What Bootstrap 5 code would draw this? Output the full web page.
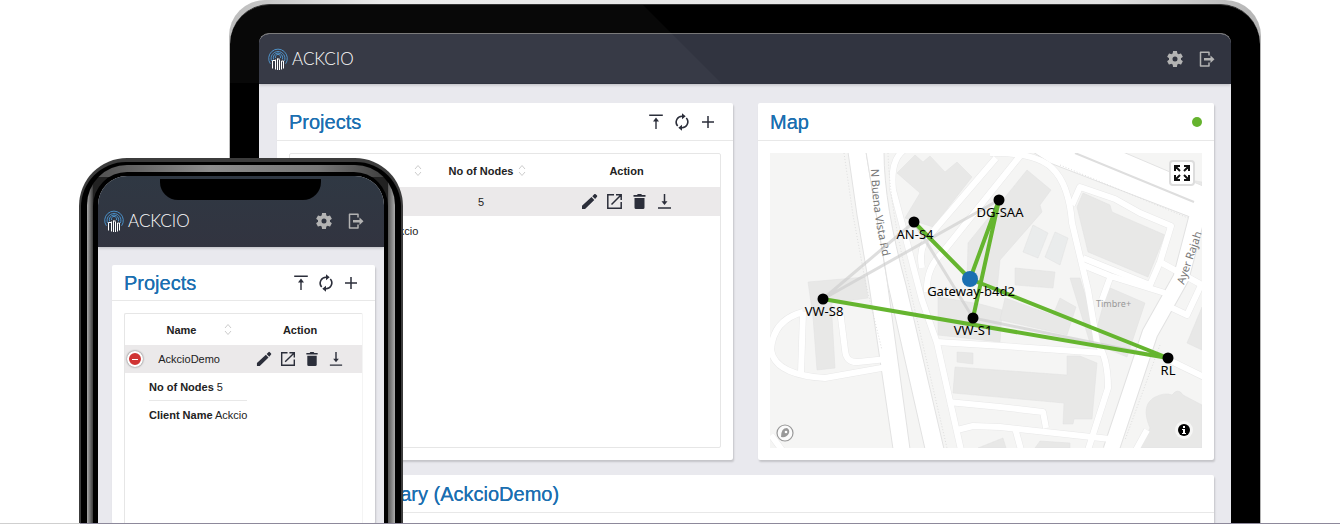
<!DOCTYPE html>
<html lang="en">
<head>
<meta charset="utf-8">
<meta name="viewport" content="width=device-width, initial-scale=1">
<title>Ackcio dashboard</title>
<link href="https://cdn.jsdelivr.net/npm/bootstrap@5.3.0/dist/css/bootstrap.min.css" rel="stylesheet">
<style>
  body { font-family: "Liberation Sans", Arial, sans-serif; font-size: 11px; line-height: 16px; color: #222; background: #fff; }
  .stage { height: 100vh; padding-left: 229px; padding-right: 79px; }
  .ground { height: 1px; bottom: 0; left: 0; right: 0; z-index: 5; background: linear-gradient(to right, #cfcfcf 80px, #8d899b 80px); }

  /* tablet */
  .tablet-rim { background: linear-gradient(to right, #bcbcbc, #ececec 15%, #e2e2e2 85%, #b4b4b4); border-radius: 36px 36px 0 0; padding: 4px 1px 0; min-height: 100%; }
  .tablet-bezel { background: #000; border-radius: 40px 40px 0 0; border-top: 1px solid #333; padding: 28px 29px 0 29px; }
  .tablet-bezel::before { content: ""; position: absolute; top: 0; left: 0; right: 0; height: 78px; border-radius: 40px 0 0 0; background: rgba(255,255,255,.03); clip-path: polygon(0 0, 413px 0, 491px 78px, 0 78px); z-index: 1; pointer-events: none; }
  .tablet-screen { border-radius: 10px 10px 0 0; background: #e9e9ee; border-top: 1px solid #777; overflow: hidden; }
  .app-bar { background: #313440; height: 50px; padding: 0 14px 0 9px; box-shadow: 0 1px 3px rgba(0,0,0,.2); }
  .board { padding: 19px 17px 0 18px; }
  .board-grid { display: grid; grid-template-columns: 1fr 1fr; column-gap: 25px; row-gap: 15px; }
  .span-all { grid-column: 1 / -1; }

  /* brand and bar buttons */
  .wordmark { font-family: Lato, sans-serif; font-weight: 300; font-size: 17px; line-height: 20px; color: #fff; }
  .tool { border: 0; background: none; padding: 0; display: flex; align-items: center; justify-content: center; width: 20px; height: 20px; color: #2b2e3a; }
  .app-bar .tool { color: #b3b3b3; }
  .tool-sm { width: 17px; height: 17px; }

  /* panels */
  .panel { background: #fff; border: 0; border-radius: 2px; box-shadow: 1px 2px 2px rgba(0,0,0,.16); }
  .panel-top { height: 38px; border-bottom: 1px solid #e8e8e8; padding: 0 12px; }
  .panel-tools { display: flex; gap: 6px; margin-right: 3px; }
  .panel-title { font-size: 20px; line-height: 24px; font-weight: 400; color: #1b6fb1; margin: 0; text-shadow: 0 0 0 #1b6fb1; }
  .panel-main { padding: 12px 12px 12px 12px; }
  .frame { border: 1px solid #e6e6e6; border-radius: 2px; height: 295px; }
  .status { width: 10px; height: 10px; border-radius: 5px; background: #65b32e; }

  /* project table */
  .grid-table { width: 100%; table-layout: fixed; text-align: center; }
  .grid-table th { height: 33px; padding: 0; font-weight: 700; position: relative; }
  .grid-table td { padding: 0; height: 29px; }
  .grid-table .hit td { background: #ebe9ea; }
  .c-name { width: 139px; } .c-nodes { width: 104px; }
  .phone .c-name { width: 113px; }
  .phone .grid-table th { height: 31px; }
  .phone .grid-table td { height: 28px; }
  .actions { display: flex; justify-content: center; gap: 8px; }
  .phone .actions { gap: 7px; }
  .sorter { position: absolute; right: 7px; top: 10px; width: 8px; height: 13px; padding: 0; border: 0; background: none; color: #ccc; display: flex; }
  .phone .sorter { top: 9px; right: 6px; }
  .toggle { width: 16px; height: 16px; border: 2px solid #fff; border-radius: 8px; background: #d03434; box-shadow: 0 0 2px #555; color: #fff; padding: 0; display: flex; align-items: center; justify-content: center; }
  .toggle::before { content: ""; width: 6px; height: 1px; background: #fff; }
  .name-cell { padding: 0 18px 0 2px; }
  .more { list-style: none; margin: 0 0 0 30px; padding: 0; text-align: left; }
  .more li { padding: 6px 0 5px; }
  .phone .more { margin-left: 24px; display: table; }
  .phone .more li + li { border-top: 1px solid #e8e8e8; }

  /* phone */
  .phone { left: 79px; top: 158px; bottom: 0; width: 324px; z-index: 3; background: #3c3c3c; border-radius: 48px 48px 0 0; padding: 4px 2px 0; }
  .ring-a { height: 100%; background: #000; border-radius: 45px 45px 0 0; padding: 3px 6px 0; }
  .ring-b { height: 100%; border-radius: 40px 40px 0 0; padding: 7px 7px 0 6px;
    background: linear-gradient(to right, #555 6%, #8d8d8d 40%, #777 75%, #444 95%) top / 100% 12px no-repeat, linear-gradient(to right, #aaa, #3a3a3a) left / 6px 100% no-repeat, linear-gradient(to right, #555, #aaa) right / 7px 100% no-repeat, #222; }
  .ring-c { height: 100%; background: #000; border-radius: 34px 34px 0 0; padding: 4px 4px 0 5px; }
  .phone-screen { height: 100%; border-radius: 29px 29px 0 0; background: #e9e9ee; overflow: hidden; }
  .notch { width: 161px; height: 21px; top: 3px; left: 62px; border-radius: 0 0 18px 18px; background: #000; }
  .phone .app-bar { height: 71px; padding: 18px 18px 0 6px; background: linear-gradient(#2f3843, #323440); }
  .phone .board { padding: 18px 9px 0 14px; height: 100%; }
  .phone .panel-top { height: 36px; }
  .phone .panel-tools { gap: 5px; margin-right: 2px; }
  .phone .panel { height: 100%; }
  .phone .frame { height: 100%; border-right-color: #f4f4f4; }

  .map-text { font-family: "Noto Sans", sans-serif; font-size: 13px; text-anchor: middle; fill: #000; }
  .map-btn { top: 7px; right: 7px; width: 26px; height: 26px; border: 2px solid #ddd; border-radius: 4px; background: #fff; color: #111; padding: 0; }
</style>
</head>
<body>

<svg class="d-none" aria-hidden="true">
  <symbol id="logo" viewBox="0 0 20 22">
    <g fill="none" stroke="#4a8fc7" stroke-width="1">
      <path d="M2.400 15.800A9.300 9.300 0 1 1 17.600 15.800"/>
      <path d="M3.600 13A6.900 6.900 0 1 1 16.400 13"/>
      <path d="M5.600 11.400A4.700 4.700 0 1 1 14.400 11.400"/>
      <path d="M7.600 10A2.600 2.600 0 1 1 12.400 10"/>
    </g>
    <path fill="none" stroke="#fff" stroke-width="1" d="M4.500 20.500V12.500H7.500M7.500 21.500V11.500M9.500 22V10.500M11.500 22V11.500M9.500 11H11.500M15.500 20.500V13H13.500V21.500"/>
  </symbol>
  <symbol id="gear" viewBox="0 0 24 24"><path fill="currentColor" d="M19.14 12.94c.04-.3.06-.61.06-.94 0-.32-.02-.64-.07-.94l2.03-1.58c.18-.14.23-.41.12-.61l-1.92-3.32c-.12-.22-.37-.29-.59-.22l-2.39.96c-.5-.38-1.03-.7-1.62-.94l-.36-2.54c-.04-.24-.24-.41-.48-.41h-3.84c-.24 0-.43.17-.47.41l-.36 2.54c-.59.24-1.13.57-1.62.94l-2.39-.96c-.22-.08-.47 0-.59.22L2.74 8.87c-.12.21-.08.47.12.61l2.03 1.58c-.05.3-.09.63-.09.94s.02.64.07.94l-2.03 1.58c-.18.14-.23.41-.12.61l1.92 3.32c.12.22.37.29.59.22l2.39-.96c.5.38 1.03.7 1.62.94l.36 2.54c.05.24.24.41.48.41h3.84c.24 0 .44-.17.47-.41l.36-2.54c.59-.24 1.13-.56 1.62-.94l2.39.96c.22.08.47 0 .59-.22l1.92-3.32c.12-.22.07-.47-.12-.61l-2.01-1.58zM12 15a3 3 0 1 1 0-6 3 3 0 0 1 0 6z"/></symbol>
  <symbol id="exit" viewBox="0 0 20 20"><path fill="none" stroke="currentColor" stroke-width="1.5" stroke-linejoin="round" d="M12 6.500V3.200H3.500V17H12V13.500"/><path fill="currentColor" d="M7 9h6.500V6.500L17.500 10.200 13.500 14V11.400H7z"/></symbol>
  <symbol id="totop" viewBox="0 0 20 20"><path fill="none" stroke="currentColor" stroke-width="1.4" d="M3.200 3.200H16.800M10 17V7"/><path fill="currentColor" d="M7 9.500L10 5.500l3 4z"/></symbol>
  <symbol id="sync" viewBox="0 0 20 20"><path fill="none" stroke="currentColor" stroke-width="1.600" d="M10.500 4.200A5.900 5.900 0 0 0 5.700 14M9.500 15.800A5.900 5.900 0 0 0 14.300 6"/><path fill="currentColor" d="M10 1.200L13.700 4.200 10 7.200zM10 12.800V18.800L6.300 15.800z"/></symbol>
  <symbol id="plus" viewBox="0 0 20 20"><path stroke="currentColor" stroke-width="1.500" d="M4 10H16M10 4V16"/></symbol>
  <symbol id="pencil" viewBox="0 0 17 17"><path fill="currentColor" d="M1 16V12.700L10.500 4l2.800 2.900L4 16zM11.300 3.200L13.500 1.100Q14.100.7 14.700 1.200L16 2.600Q16.500 3.200 16 3.800L14.100 6z"/></symbol>
  <symbol id="open" viewBox="0 0 17 17"><path fill="none" stroke="currentColor" stroke-width="1.500" d="M8 1.800H1.800V15.200H15.200V9M10 1.800H15.200V7M15 2L5.500 11.500"/></symbol>
  <symbol id="bin" viewBox="0 0 17 17"><path fill="currentColor" d="M3.500 5H13.500V14.500Q13.500 16 12 16H5Q3.500 16 3.500 14.500zM2.500 2H6L6.800 1H10.200L11 2H14.500V3.700H2.500z"/></symbol>
  <symbol id="down" viewBox="0 0 17 17"><path fill="none" stroke="currentColor" stroke-width="1.500" d="M2 15H15M8.500 1V10"/><path fill="currentColor" d="M5.500 8.300H11.500L8.500 12z"/></symbol>
  <symbol id="updown" viewBox="0 0 8 13"><path fill="none" stroke="currentColor" d="M1 5L4 1.500 7 5M1 8L4 11.500 7 8"/></symbol>
</svg>

<main class="stage position-relative overflow-hidden">
  <div class="tablet-rim">
    <div class="tablet-bezel position-relative">
      <div class="tablet-screen">
        <header class="app-bar d-flex align-items-center gap-1">
          <svg width="20" height="22" aria-hidden="true"><use href="#logo"/></svg>
          <span class="wordmark">ACKCIO</span>
          <button class="tool ms-auto me-2" type="button" aria-label="Settings"><svg width="20" height="20"><use href="#gear"/></svg></button>
          <button class="tool" type="button" aria-label="Log out"><svg width="20" height="20"><use href="#exit"/></svg></button>
        </header>
        <div class="board">
          <div class="board-grid">
            <section class="panel">
              <div class="panel-top d-flex align-items-center justify-content-between">
                <h2 class="panel-title">Projects</h2>
                <div class="panel-tools">
                  <button class="tool" type="button" aria-label="Export"><svg width="20" height="20"><use href="#totop"/></svg></button>
                  <button class="tool" type="button" aria-label="Refresh"><svg width="20" height="20"><use href="#sync"/></svg></button>
                  <button class="tool" type="button" aria-label="Add"><svg width="20" height="20"><use href="#plus"/></svg></button>
                </div>
              </div>
              <div class="panel-main">
                <div class="frame">
                  <table class="grid-table">
                    <thead><tr>
                      <th class="c-name">Name<button class="sorter" type="button" aria-label="Sort by name"><svg width="8" height="13"><use href="#updown"/></svg></button></th>
                      <th class="c-nodes">No of Nodes<button class="sorter" type="button" aria-label="Sort by nodes"><svg width="8" height="13"><use href="#updown"/></svg></button></th>
                      <th>Action</th>
                    </tr></thead>
                    <tbody>
                      <tr class="hit">
                        <td>AckcioDemo</td>
                        <td>5</td>
                        <td><div class="actions">
                          <button class="tool tool-sm" type="button" aria-label="Edit"><svg width="17" height="17"><use href="#pencil"/></svg></button>
                          <button class="tool tool-sm" type="button" aria-label="Open"><svg width="17" height="17"><use href="#open"/></svg></button>
                          <button class="tool tool-sm" type="button" aria-label="Delete"><svg width="17" height="17"><use href="#bin"/></svg></button>
                          <button class="tool tool-sm" type="button" aria-label="Download"><svg width="17" height="17"><use href="#down"/></svg></button>
                        </div></td>
                      </tr>
                      <tr><td colspan="3"><ul class="more"><li><b>Client Name</b> Ackcio</li></ul></td></tr>
                    </tbody>
                  </table>
                </div>
              </div>
            </section>

            <section class="panel">
              <div class="panel-top d-flex align-items-center justify-content-between">
                <h2 class="panel-title">Map</h2>
                <span class="status" role="img" aria-label="Online"></span>
              </div>
              <div class="panel-main">
                <div class="position-relative">
                <svg class="d-block w-100" viewBox="770 153 432 295" role="img" aria-label="Node map">
                  <path fill="#f5f5f4" d="M770 153H1202V448H770z"/>
                  <!-- buildings -->
                  <g fill="#e8e8e7" stroke="#e1e1e1" stroke-width=".5">
                    <path d="M808 282L865 277 868 298 832 303 832 317 835 368 817 370 813 317z"/>
                    <path d="M897 173L915 155 923 162 930 156 945 172 957 162 972 177 933 227 905 218 920 193z"/>
                    <path d="M1027 170L1051 190 1040 205 1042 212 1000 260 997 290 967 282 968 243z"/>
                    <path d="M1015 268L1055 272 1053 288 1015 285z"/>
                    <path d="M1083 193L1110 205 1112 212 1165 235 1148 277 1088 252 1077 207z"/>
                    <path d="M938 297L980 304 1002 310 1000 342 938 335z"/>
                    <path d="M1005 298L1053 315 1060 298 1076 307 1067 335 1000 320z"/>
                    <path d="M1108 287L1145 303 1127 357 1093 343z"/>
                    <path d="M1070 278H1080L1100 345 1090 343z"/>
                    <path d="M957 352L973 353V364L957 362z"/>
                    <path d="M955 367L1067 375V356H1080L1097 363 1092 419H1074L1073 424H1063L1064 403 953 393z"/>
                    <path d="M1202 307L1187 343 1202 350z"/>
                    <path d="M1140 448L1150 428Q1140 405 1155 397 1165 392 1172 395 1178 387 1183 395L1202 405V448z"/>
                    <path d="M978 448L1003 438 1006 448zM1035 448L1040 441 1070 443V448zM1190 180L1202 182V190z"/>
                    <path fill="#eaecec" d="M1033 225L1048 233 1038 258 1023 252zM1055 232L1068 238 1060 265 1045 257z"/>
                  </g>
                  <!-- roads: a grey casing below a white fill -->
                  <defs><g id="roads" fill="none" stroke-linejoin="round">
                    <path d="M904 150Q890 160 893 190L905 235 922 300 937 343 961 450"/>
                    <path d="M996 158L930 235Q918 247 922 268"/>
                    <path d="M1020 156L942 253Q926 268 927 292"/>
                    <path d="M990 153Q1035 152 1052 168T1072 223L1088 290 1097 343Q1108 357 1108 388L1088 450"/>
                    <path d="M1072 205L1080 187 1115 199 1140 213 1171 226 1160 262 1150 285 1083 258"/>
                    <path d="M1083 265L1110 276 1165 293M1110 278L1102 300M1170 307L1187 315 1202 283"/>
                    <path d="M937 342L1003 346 1103 353M948 402L1000 407 1043 412 1046 428M957 430L973 426 1000 427 1110 439M1015 428L1021 450M1147 430L1136 450"/>
                    <path d="M803 312Q773 320 771 350 775 375 825 378L887 367M803 312L801 373M840 310L845 350Q846 363 858 362L887 359M771 435L782 450"/>
                    <path d="M1165 358L1204 377M1160 262L1202 285"/>
                  </g></defs>
                  <use href="#roads" stroke="#e8e8e8" stroke-width="7"/>
                  <path fill="none" stroke="#e2e2e2" stroke-width="17" d="M1200 205L1181 278 1150 333 1111 450"/>
                  <path fill="#fff" stroke="#e2e2e2" d="M1030 150L1123 152 1203 186V222L1050 163z"/>
                  <path fill="#fff" stroke="#e2e2e2" d="M848 152H866L887 280 910 449H893L869 285 857 215z"/>
                  <path fill="#fff" stroke="#e2e2e2" d="M866 152H884Q884 205 906 285L944 449H925L888 285z"/>
                  <use href="#roads" stroke="#fff" stroke-width="6"/>
                  <path fill="none" stroke="#fff" stroke-width="15" d="M1200 205L1181 278 1150 333 1111 450"/>
                  <g fill="none" stroke="#dedede">
                    <path stroke-width="2" d="M1075 153L1194 202"/>
                    <path d="M1060 165L1188 218M844 153L853 215 866 285 882 350M888 153Q890 210 909 285L947 448M1160 345L1125 440" stroke-dasharray="1 2"/>
                  </g>
                  <!-- street and place names -->
                  <g font-family="Noto Sans, sans-serif" fill="#777">
                    <path id="bv" fill="none" d="M871 169Q872 215 886 270"/>
                    <text font-size="11"><textPath href="#bv">N Buena Vista Rd</textPath></text>
                    <text font-size="11" transform="translate(1184 285) rotate(-71)">Ayer Rajah</text>
                    <text x="1096" y="307" font-size="9" fill="#999">Timbre+</text>
                  </g>
                  <!-- idle links, then active links -->
                  <path fill="none" stroke="#ccc" stroke-opacity=".65" stroke-width="3" d="M914 222L823 299 999 200M914 222L973 318 1168 358"/>
                  <path fill="none" stroke="#65b52f" stroke-width="4" d="M914 222L970 279 999 200 973 318M970 279L1168 358 823 299"/>
                  <g>
                    <circle cx="999" cy="200" r="5.500"/><circle cx="914" cy="222" r="5.500"/><circle cx="823" cy="299" r="5.500"/>
                    <circle cx="973" cy="318" r="5.500"/><circle cx="1168" cy="358" r="5.500"/><circle cx="970" cy="279" r="8" fill="#1b6fb1"/>
                  </g>
                  <g class="map-text">
                    <text x="1000" y="217">DG-SAA</text><text x="915" y="239">AN-S4</text><text x="971" y="296">Gateway-b4d2</text>
                    <text x="824" y="316">VW-S8</text><text x="973" y="335">VW-S1</text><text x="1168" y="375">RL</text>
                  </g>
                  <!-- attribution marks -->
                  <circle cx="785" cy="433" r="8" fill="#fff" fill-opacity=".6" stroke="#999" stroke-width="1.200"/>
                  <path fill="#999" d="M781 437Q781 428 787 428 790 430 789 433 787 438 781 437z"/><circle cx="786" cy="432" r="1.300" fill="#fff"/>
                  <circle cx="1184" cy="430" r="9" fill="#f6f6f5"/><circle cx="1184" cy="430" r="6"/>
                  <path fill="#fff" d="M1183 426H1185V428H1183zM1182 429H1185V433H1186V434H1182V433H1183V430H1182z"/>
                </svg>
                <button class="map-btn position-absolute d-flex align-items-center justify-content-center" type="button" aria-label="Full screen">
                  <svg width="18" height="18" viewBox="0 0 18 18" fill="none" stroke="currentColor" stroke-width="2"><path d="M2 7V2H7M11 2H16V7M16 11V16H11M7 16H2V11M2.500 2.500L7 7M15.500 2.500L11 7M15.500 15.500L11 11M2.500 15.500L7 11"/></svg>
                </button>
                </div>
              </div>
            </section>

            <section class="panel span-all">
              <div class="panel-top d-flex align-items-center"><h2 class="panel-title">Node Summary (AckcioDemo)</h2></div>
              <div class="panel-main"></div>
            </section>
          </div>
        </div>
      </div>
    </div>
  </div>

  <div class="phone position-absolute">
    <div class="ring-a"><div class="ring-b"><div class="ring-c">
      <div class="phone-screen position-relative d-flex flex-column">
        <div class="notch position-absolute"></div>
        <header class="app-bar d-flex align-items-center gap-1 flex-shrink-0">
          <svg width="20" height="22" aria-hidden="true"><use href="#logo"/></svg>
          <span class="wordmark">ACKCIO</span>
          <button class="tool ms-auto me-2" type="button" aria-label="Settings"><svg width="20" height="20"><use href="#gear"/></svg></button>
          <button class="tool" type="button" aria-label="Log out"><svg width="20" height="20"><use href="#exit"/></svg></button>
        </header>
        <div class="board">
          <section class="panel">
            <div class="panel-top d-flex align-items-center justify-content-between">
              <h2 class="panel-title">Projects</h2>
              <div class="panel-tools">
                <button class="tool" type="button" aria-label="Export"><svg width="20" height="20"><use href="#totop"/></svg></button>
                <button class="tool" type="button" aria-label="Refresh"><svg width="20" height="20"><use href="#sync"/></svg></button>
                <button class="tool" type="button" aria-label="Add"><svg width="20" height="20"><use href="#plus"/></svg></button>
              </div>
            </div>
            <div class="panel-main h-100">
              <div class="frame">
                <table class="grid-table">
                  <thead><tr>
                    <th class="c-name">Name<button class="sorter" type="button" aria-label="Sort by name"><svg width="8" height="13"><use href="#updown"/></svg></button></th>
                    <th>Action</th>
                  </tr></thead>
                  <tbody>
                    <tr class="hit">
                      <td><div class="name-cell d-flex align-items-center justify-content-between"><button class="toggle" type="button" aria-label="Collapse"></button><span>AckcioDemo</span></div></td>
                      <td><div class="actions">
                        <button class="tool tool-sm" type="button" aria-label="Edit"><svg width="16" height="16"><use href="#pencil"/></svg></button>
                        <button class="tool tool-sm" type="button" aria-label="Open"><svg width="16" height="16"><use href="#open"/></svg></button>
                        <button class="tool tool-sm" type="button" aria-label="Delete"><svg width="16" height="16"><use href="#bin"/></svg></button>
                        <button class="tool tool-sm" type="button" aria-label="Download"><svg width="16" height="16"><use href="#down"/></svg></button>
                      </div></td>
                    </tr>
                    <tr><td colspan="2"><ul class="more"><li><b>No of Nodes</b> 5</li><li><b>Client Name</b> Ackcio</li></ul></td></tr>
                  </tbody>
                </table>
              </div>
            </div>
          </section>
        </div>
      </div>
    </div></div></div>
  </div>
  <div class="ground position-absolute"></div>
</main>

<script src="https://cdn.jsdelivr.net/npm/bootstrap@5.3.0/dist/js/bootstrap.bundle.min.js"></script>
</body>
</html>
